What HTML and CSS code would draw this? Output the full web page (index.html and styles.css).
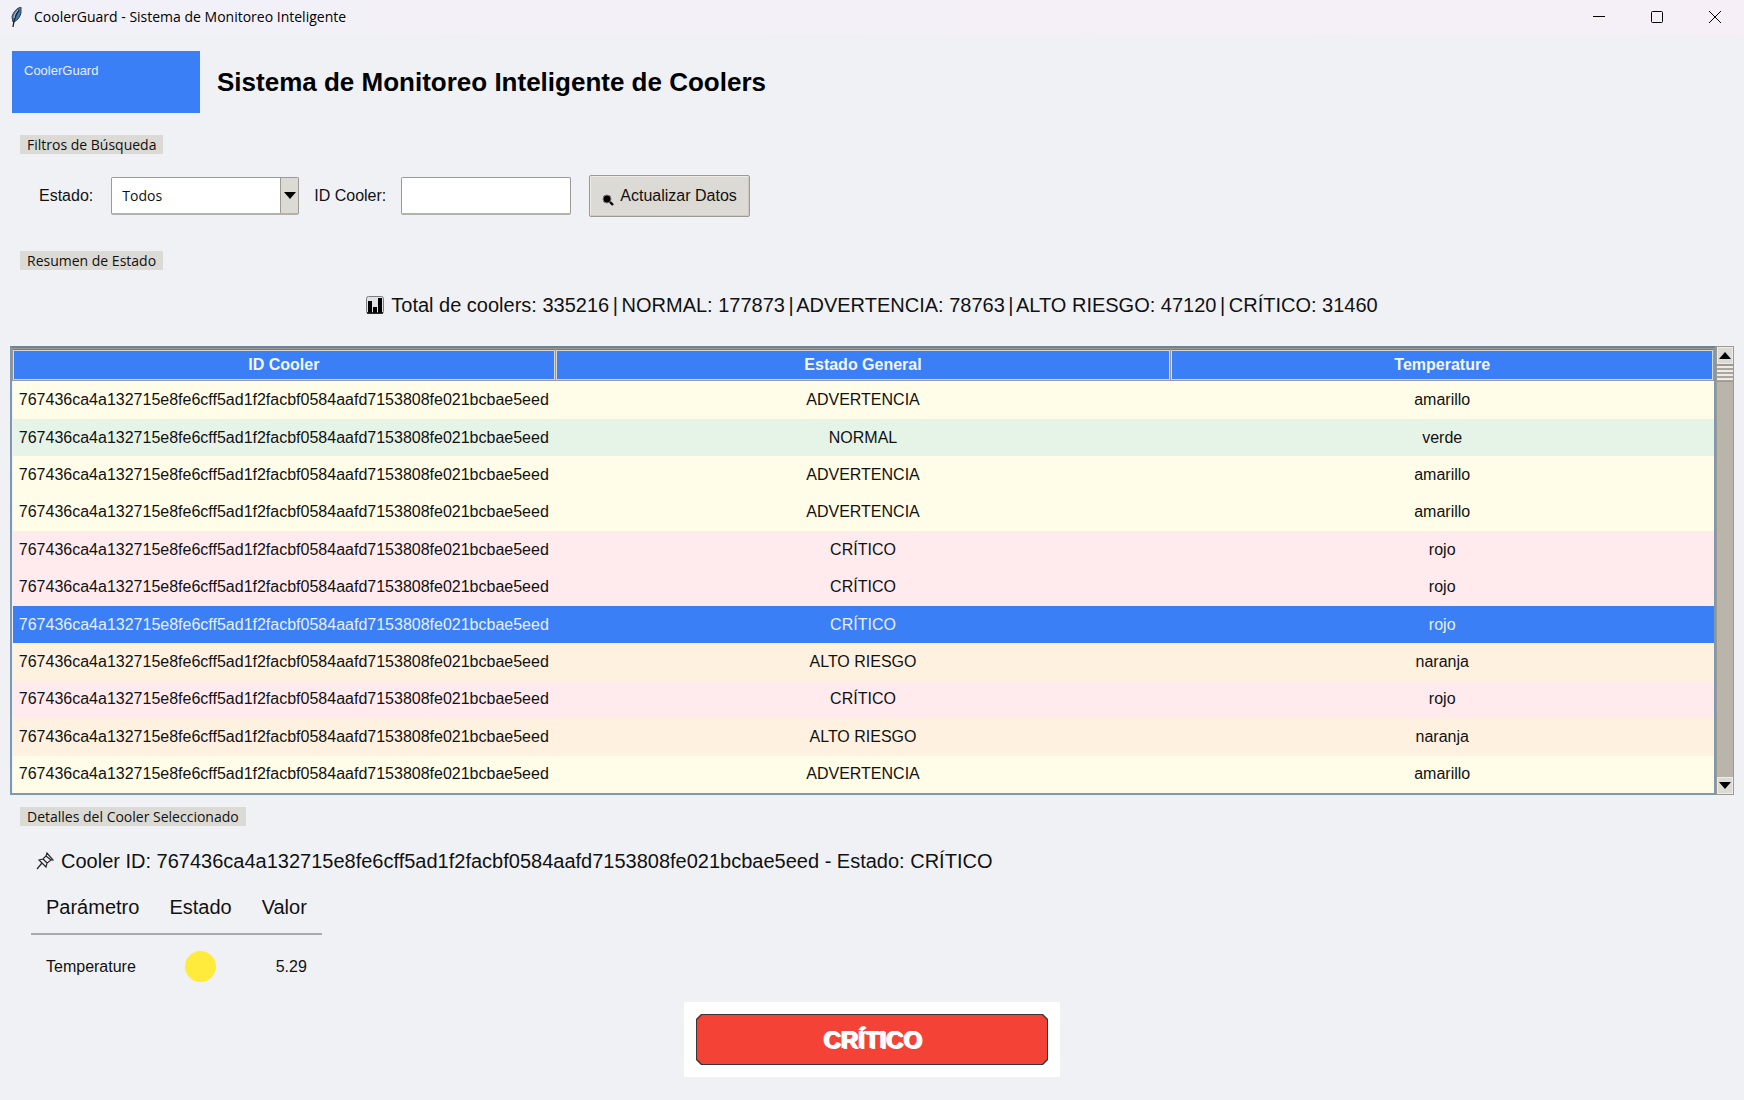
FILE: index.html
```html
<!doctype html>
<html lang="es">
  <head>
    <meta charset="utf-8">
    <title>CoolerGuard - Sistema de Monitoreo Inteligente</title>
    <link rel="stylesheet" href="styles.css">
  </head>
  <body>
    <div class="titlebar">
      <svg class="feather" width="14" height="20" viewBox="0 0 14 20">
        <path d="M11 0C7 1 3 5 2 10l1 5 1 0C8 13 10 10 11 6Z" fill="#3f77ad" stroke="#3a3f47"/>
        <path d="M9 3C6 7 4 12 3 20" fill="none" stroke="#20252c" stroke-width="1.3"/>
        <path d="M8 3C6 5 4 8 4 11" fill="none" stroke="#a8cbe8"/>
      </svg>
      <span class="window-title">CoolerGuard - Sistema de Monitoreo Inteligente</span>
      <div class="window-buttons">
        <button aria-label="Minimizar"><svg width="12" height="12" viewBox="0 0 12 12"><path d="M0 5.5h12"/></svg></button>
        <button aria-label="Maximizar"><svg width="12" height="12" viewBox="0 0 12 12"><rect x=".5" y=".5" width="11" height="11" rx="1"/></svg></button>
        <button aria-label="Cerrar"><svg width="12" height="12" viewBox="0 0 12 12"><path d="M0 0l12 12M12 0L0 12"/></svg></button>
      </div>
    </div>

    <main>
      <header>
        <div class="logo">CoolerGuard</div>
        <h1>Sistema de Monitoreo Inteligente de Coolers</h1>
      </header>

      <fieldset class="filters">
        <legend>Filtros de Búsqueda</legend>
        <div class="filter-row">
          <label for="estado">Estado:</label>
          <div class="combo">
            <select id="estado">
              <option>Todos</option>
              <option>NORMAL</option>
              <option>ADVERTENCIA</option>
              <option>ALTO RIESGO</option>
              <option>CRÍTICO</option>
            </select>
            <span class="combo-arrow"><svg width="12" height="7" viewBox="0 0 12 7"><path d="M0 0h12L6 7Z"/></svg></span>
          </div>
          <label for="coolerId">ID Cooler:</label>
          <input type="text" id="coolerId">
          <button class="refresh">
            <svg width="12" height="12" viewBox="0 0 12 12">
              <path d="M7 7l4 4" stroke="#000" stroke-width="2.4"/>
              <circle cx="5" cy="5" r="4" stroke="#777"/>
            </svg>
            Actualizar Datos
          </button>
        </div>
      </fieldset>

      <fieldset class="summary">
        <legend>Resumen de Estado</legend>
        <p>
          <svg width="18" height="18" viewBox="0 0 18 18">
            <rect x=".5" y=".5" width="17" height="17" rx="2" fill="#dfe1e6" stroke="#777b82"/>
            <path d="M2 17V5h4v12zM7 17v-6h4v6zM12 17V2h4v15z"/>
            <path d="M1 17h16" stroke="#111" stroke-width="1.5"/>
          </svg>
          <span>Total de coolers: 335216 <i>|</i> NORMAL: 177873 <i>|</i> ADVERTENCIA: 78763 <i>|</i> ALTO RIESGO: 47120 <i>|</i> CRÍTICO: 31460</span>
        </p>
      </fieldset>

      <div class="list">
        <div class="list-view">
          <table class="coolers">
            <colgroup><col><col class="general"><col></colgroup>
            <thead>
              <tr><th><span>ID Cooler</span></th><th><span>Estado General</span></th><th><span>Temperature</span></th></tr>
            </thead>
            <tbody>
              <tr class="amarillo"><td>767436ca4a132715e8fe6cff5ad1f2facbf0584aafd7153808fe021bcbae5eed</td><td>ADVERTENCIA</td><td>amarillo</td></tr>
              <tr class="verde"><td>767436ca4a132715e8fe6cff5ad1f2facbf0584aafd7153808fe021bcbae5eed</td><td>NORMAL</td><td>verde</td></tr>
              <tr class="amarillo"><td>767436ca4a132715e8fe6cff5ad1f2facbf0584aafd7153808fe021bcbae5eed</td><td>ADVERTENCIA</td><td>amarillo</td></tr>
              <tr class="amarillo"><td>767436ca4a132715e8fe6cff5ad1f2facbf0584aafd7153808fe021bcbae5eed</td><td>ADVERTENCIA</td><td>amarillo</td></tr>
              <tr class="rojo"><td>767436ca4a132715e8fe6cff5ad1f2facbf0584aafd7153808fe021bcbae5eed</td><td>CRÍTICO</td><td>rojo</td></tr>
              <tr class="rojo"><td>767436ca4a132715e8fe6cff5ad1f2facbf0584aafd7153808fe021bcbae5eed</td><td>CRÍTICO</td><td>rojo</td></tr>
              <tr class="selected"><td>767436ca4a132715e8fe6cff5ad1f2facbf0584aafd7153808fe021bcbae5eed</td><td>CRÍTICO</td><td>rojo</td></tr>
              <tr class="naranja"><td>767436ca4a132715e8fe6cff5ad1f2facbf0584aafd7153808fe021bcbae5eed</td><td>ALTO RIESGO</td><td>naranja</td></tr>
              <tr class="rojo"><td>767436ca4a132715e8fe6cff5ad1f2facbf0584aafd7153808fe021bcbae5eed</td><td>CRÍTICO</td><td>rojo</td></tr>
              <tr class="naranja"><td>767436ca4a132715e8fe6cff5ad1f2facbf0584aafd7153808fe021bcbae5eed</td><td>ALTO RIESGO</td><td>naranja</td></tr>
              <tr class="amarillo"><td>767436ca4a132715e8fe6cff5ad1f2facbf0584aafd7153808fe021bcbae5eed</td><td>ADVERTENCIA</td><td>amarillo</td></tr>
            </tbody>
          </table>
        </div>
        <div class="scrollbar">
          <button aria-label="Subir"><svg width="12" height="7" viewBox="0 0 12 7"><path d="M0 7h12L6 0Z"/></svg></button>
          <div class="thumb"></div>
          <button class="down" aria-label="Bajar"><svg width="12" height="7" viewBox="0 0 12 7"><path d="M0 0h12L6 7Z"/></svg></button>
        </div>
      </div>

      <fieldset class="details">
        <legend>Detalles del Cooler Seleccionado</legend>
        <p>
          <svg width="18" height="18" viewBox="0 0 18 18" fill="none" stroke="#26262c" stroke-width="1.2">
            <path d="M1 17l5-6M3 8l7 7 1-4 4-3 2 0-6-7-1 3-3 3ZM7 7l4 4M10 4l5 4"/>
          </svg>
          Cooler ID: 767436ca4a132715e8fe6cff5ad1f2facbf0584aafd7153808fe021bcbae5eed - Estado: CRÍTICO
        </p>
        <table class="params">
          <thead>
            <tr><th>Parámetro</th><th>Estado</th><th>Valor</th></tr>
          </thead>
          <tbody>
            <tr><td>Temperature</td><td><span class="dot"></span></td><td>5.29</td></tr>
          </tbody>
        </table>
      </fieldset>

      <div class="status">
        <div class="status-edge"><div class="status-fill">CRÍTICO</div></div>
      </div>
    </main>
  </body>
</html>
```
FILE: styles.css
```css
* {
  box-sizing: border-box;
}

body {
  margin: 0;
  min-height: 100vh;
  background: #f0f1f5;
  color: #111;
  font: 16px/20px "Liberation Sans", Arial, sans-serif;
}

button, input, select {
  font: inherit;
  color: inherit;
}

.titlebar {
  display: flex;
  align-items: center;
  height: 35px;
  padding: 0 0 2px 10px;
  background: linear-gradient(90deg, #f2f1f8, #f6eff7);
}

.window-title {
  margin-left: 10px;
  font: 14px/20px "Open Sans", "Noto Sans", sans-serif;
  color: #000;
}

.window-buttons {
  display: flex;
  margin-left: auto;
}

.window-buttons button {
  display: flex;
  align-items: center;
  justify-content: center;
  width: 58px;
  height: 33px;
  padding: 0;
  border: 0;
  background: none;
}

.window-buttons svg {
  fill: none;
  stroke: #000;
}

main {
  padding: 16px 10px 20px;
}

header {
  display: flex;
  align-items: center;
  gap: 17px;
  padding-left: 2px;
}

.logo {
  width: 188px;
  height: 62px;
  padding: 10px 12px;
  background: #3a7ff6;
  color: #e6efff;
  font-size: 13px;
}

h1 {
  margin: 0;
  font-size: 26px;
  line-height: 32px;
  color: #000;
}

fieldset {
  margin: 0;
  padding: 0;
  border: 0;
}

legend {
  margin-left: 10px;
  padding: 0 7px;
  background: #dcdad5;
  font: 14px/19px "Open Sans", "Noto Sans", sans-serif;
}

.filters {
  margin-top: 22px;
}

.filter-row {
  display: flex;
  align-items: center;
  padding: 21px 30px 0 29px;
}

.combo {
  display: flex;
  position: relative;
  width: 188px;
  margin: 0 15px 0 18px;
}

.combo select, #coolerId {
  height: 38px;
  border: 1px solid #9e9a91;
  border-bottom-width: 2px;
  border-bottom-color: #b5b1a8;
  border-radius: 2px;
  background: #fff;
}

.combo select {
  width: 100%;
  padding: 0 10px;
  appearance: none;
  font: 14px/20px "Open Sans", "Noto Sans", sans-serif;
}

.combo-arrow {
  position: absolute;
  top: 1px;
  right: 1px;
  bottom: 2px;
  display: flex;
  align-items: center;
  justify-content: center;
  width: 18px;
  border-left: 1px solid #9e9a91;
  background: #dcdad5;
  pointer-events: none;
}

#coolerId {
  width: 170px;
  margin: 0 18px 0 15px;
  padding: 0 10px;
}

.refresh {
  display: flex;
  align-items: center;
  gap: 6px;
  height: 42px;
  padding: 0 12px;
  border: 1px solid #9e9a91;
  border-radius: 2px;
  background: #dcdad5;
  box-shadow: inset 1px 1px #eeebe7, inset -1px -1px #cfcbc3;
}

.refresh svg {
  margin-top: 8px;
}

.summary {
  margin-top: 34px;
}

.summary p, .details p {
  display: flex;
  align-items: center;
  gap: 7px;
  margin: 0;
  font-size: 20px;
  line-height: 24px;
}

.summary p {
  justify-content: center;
  padding-top: 23px;
}

.summary i {
  margin: 0 -2px;
  font-style: normal;
}

.list {
  display: flex;
  margin-top: 29px;
}

.list-view {
  flex: 1;
  border: 2px solid #7c98b2;
  border-top-color: #6d8393;
}

.coolers {
  width: 100%;
  height: 445px;
  table-layout: fixed;
  border-collapse: collapse;
  text-align: center;
}

.general {
  width: 36.2%;
}

.coolers th {
  height: 32px;
  padding: 0;
  border: 1px solid #9e9a91;
  background: #3a7ff6;
  color: #f2f6ff;
}

.coolers th span {
  display: block;
  border: 1px solid #d8d6d0;
  line-height: 28px;
}

.coolers td {
  padding: 0;
}

.amarillo {
  background: #fffde7;
}

.verde {
  background: #e6f4e8;
}

.rojo {
  background: #ffebee;
}

.naranja {
  background: #fff1e0;
}

.selected {
  background: #3a7ff6;
  color: #e6efff;
}

.scrollbar {
  display: flex;
  flex-direction: column;
  width: 18px;
  border: 1px solid #9e9a91;
  background: #bab5ab;
}

.scrollbar button {
  display: flex;
  align-items: center;
  justify-content: center;
  height: 17px;
  padding: 0;
  border: 1px solid #eeebe7;
  background: #dcdad5;
}

.thumb {
  height: 18px;
  border: 1px solid #9e9a91;
  border-width: 2px 0 1px;
  background: repeating-linear-gradient(#eeebe7 0 2px, #aaa69d 2px 4px);
}

.scrollbar .down {
  margin-top: auto;
}

.details {
  margin-top: 12px;
}

.details p {
  padding: 23px 0 0 26px;
}

.params {
  margin: 14px 0 0 21px;
  border-collapse: collapse;
}

.params th {
  padding: 8px 15px 14px;
  border-bottom: 2px solid #aaa;
  font-size: 20px;
  font-weight: normal;
  line-height: 24px;
  text-align: left;
}

.params td {
  padding: 16px 15px 0;
}

.params td:last-child {
  text-align: right;
}

.dot {
  display: block;
  width: 31px;
  height: 31px;
  margin: 0 auto;
  border-radius: 50%;
  background: #ffeb3b;
}

.status {
  width: 376px;
  margin: 20px auto 0;
  padding: 12px;
  background: #fff;
}

/* both layers are cut at the corners, the outer one shows as the outline */
.status-edge, .status-fill {
  clip-path: polygon(5px 0, calc(100% - 5px) 0, 100% 5px, 100% calc(100% - 5px), calc(100% - 5px) 100%, 5px 100%, 0 calc(100% - 5px), 0 5px);
}

.status-edge {
  padding: 1px;
  background: #3c3434;
}

.status-fill {
  background: #f44336;
  color: #fff;
  font-size: 24px;
  font-weight: bold;
  line-height: 49px;
  text-align: center;
  text-shadow: 2px 1px #fff, 1px 0 #fff;
}
```
